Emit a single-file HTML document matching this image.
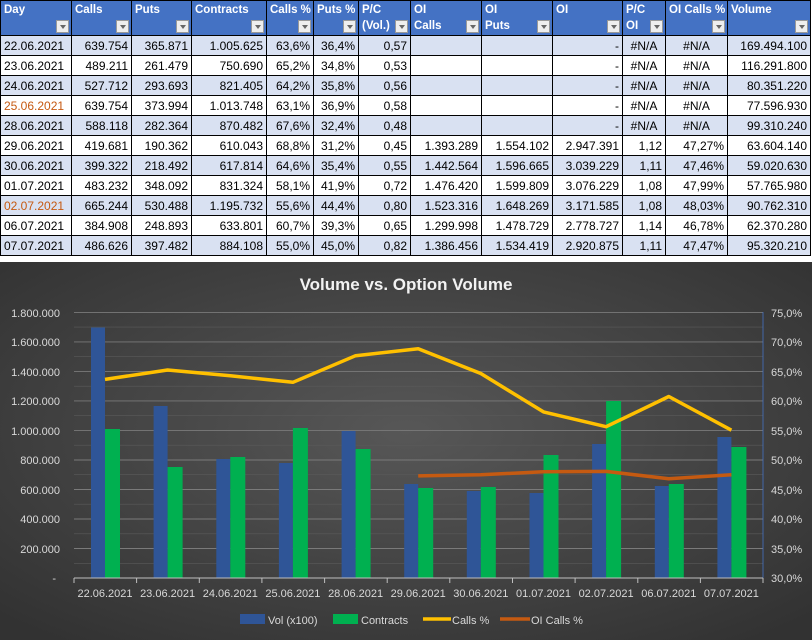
<!DOCTYPE html>
<html><head><meta charset="utf-8"><style>
body{margin:0;width:812px;height:640px;overflow:hidden;background:#fff;font-family:"Liberation Sans",sans-serif;}
table{position:absolute;left:0;top:0;border-collapse:collapse;table-layout:fixed;width:810px;}
td{border:1px solid #000;font-size:12px;height:19px;padding:0 3px;text-align:right;white-space:nowrap;overflow:hidden;color:#000;}
tr.h td{background:#4472C4;color:#fff;font-weight:bold;height:33px;text-align:left;vertical-align:top;position:relative;font-size:11.5px;line-height:16px;padding-top:1px;}
tr.b td{background:#D9E1F2;}
td.d{text-align:left;}
td.c{text-align:center;}
.o{color:#C65911;}
.f{position:absolute;right:2px;bottom:2px;width:13px;height:13px;background:#eee;border:1px solid #999;box-sizing:border-box;}
.f:after{content:"";position:absolute;left:3px;top:4px;border-left:3px solid transparent;border-right:3px solid transparent;border-top:4px solid #666;}
#ch{position:absolute;left:0;top:262px;}
</style></head><body>
<table>
<colgroup><col style="width:71px"><col style="width:60px"><col style="width:60px"><col style="width:75px"><col style="width:47px"><col style="width:45px"><col style="width:52px"><col style="width:71px"><col style="width:71px"><col style="width:70px"><col style="width:43px"><col style="width:62px"><col style="width:83px"></colgroup>
<tr class="h"><td>Day<span class="f"></span></td><td>Calls<span class="f"></span></td><td>Puts<span class="f"></span></td><td>Contracts<span class="f"></span></td><td>Calls %<span class="f"></span></td><td>Puts %<span class="f"></span></td><td>P/C<br>(Vol.)<span class="f"></span></td><td>OI<br>Calls<span class="f"></span></td><td>OI<br>Puts<span class="f"></span></td><td>OI<span class="f"></span></td><td>P/C<br>OI<span class="f"></span></td><td>OI Calls %<span class="f"></span></td><td>Volume<span class="f"></span></td></tr>
<tr class="b"><td class="d">22.06.2021</td><td>639.754</td><td>365.871</td><td>1.005.625</td><td>63,6%</td><td>36,4%</td><td>0,57</td><td></td><td></td><td>-</td><td class="c">#N/A</td><td class="c">#N/A</td><td>169.494.100</td></tr>
<tr><td class="d">23.06.2021</td><td>489.211</td><td>261.479</td><td>750.690</td><td>65,2%</td><td>34,8%</td><td>0,53</td><td></td><td></td><td>-</td><td class="c">#N/A</td><td class="c">#N/A</td><td>116.291.800</td></tr>
<tr class="b"><td class="d">24.06.2021</td><td>527.712</td><td>293.693</td><td>821.405</td><td>64,2%</td><td>35,8%</td><td>0,56</td><td></td><td></td><td>-</td><td class="c">#N/A</td><td class="c">#N/A</td><td>80.351.220</td></tr>
<tr><td class="d o">25.06.2021</td><td>639.754</td><td>373.994</td><td>1.013.748</td><td>63,1%</td><td>36,9%</td><td>0,58</td><td></td><td></td><td>-</td><td class="c">#N/A</td><td class="c">#N/A</td><td>77.596.930</td></tr>
<tr class="b"><td class="d">28.06.2021</td><td>588.118</td><td>282.364</td><td>870.482</td><td>67,6%</td><td>32,4%</td><td>0,48</td><td></td><td></td><td>-</td><td class="c">#N/A</td><td class="c">#N/A</td><td>99.310.240</td></tr>
<tr><td class="d">29.06.2021</td><td>419.681</td><td>190.362</td><td>610.043</td><td>68,8%</td><td>31,2%</td><td>0,45</td><td>1.393.289</td><td>1.554.102</td><td>2.947.391</td><td>1,12</td><td>47,27%</td><td>63.604.140</td></tr>
<tr class="b"><td class="d">30.06.2021</td><td>399.322</td><td>218.492</td><td>617.814</td><td>64,6%</td><td>35,4%</td><td>0,55</td><td>1.442.564</td><td>1.596.665</td><td>3.039.229</td><td>1,11</td><td>47,46%</td><td>59.020.630</td></tr>
<tr><td class="d">01.07.2021</td><td>483.232</td><td>348.092</td><td>831.324</td><td>58,1%</td><td>41,9%</td><td>0,72</td><td>1.476.420</td><td>1.599.809</td><td>3.076.229</td><td>1,08</td><td>47,99%</td><td>57.765.980</td></tr>
<tr class="b"><td class="d o">02.07.2021</td><td>665.244</td><td>530.488</td><td>1.195.732</td><td>55,6%</td><td>44,4%</td><td>0,80</td><td>1.523.316</td><td>1.648.269</td><td>3.171.585</td><td>1,08</td><td>48,03%</td><td>90.762.310</td></tr>
<tr><td class="d">06.07.2021</td><td>384.908</td><td>248.893</td><td>633.801</td><td>60,7%</td><td>39,3%</td><td>0,65</td><td>1.299.998</td><td>1.478.729</td><td>2.778.727</td><td>1,14</td><td>46,78%</td><td>62.370.280</td></tr>
<tr class="b"><td class="d">07.07.2021</td><td>486.626</td><td>397.482</td><td>884.108</td><td>55,0%</td><td>45,0%</td><td>0,82</td><td>1.386.456</td><td>1.534.419</td><td>2.920.875</td><td>1,11</td><td>47,47%</td><td>95.320.210</td></tr>
</table>
<svg id="ch" width="812" height="378" viewBox="0 262 812 378" font-family="Liberation Sans, sans-serif">
<defs><radialGradient id="g" cx="50%" cy="45%" r="70%"><stop offset="0" stop-color="#575757"/><stop offset="1" stop-color="#323232"/></radialGradient></defs>
<rect x="0" y="262" width="812" height="378" fill="url(#g)"/>
<text x="406" y="290" text-anchor="middle" fill="#f2f2f2" font-size="17" font-weight="bold">Volume vs. Option Volume</text>
<g stroke="#5a5a5a" stroke-width="0.6">
<line x1="74" x2="763" y1="327.1" y2="327.1"/><line x1="74" x2="763" y1="356.6" y2="356.6"/><line x1="74" x2="763" y1="386.2" y2="386.2"/><line x1="74" x2="763" y1="415.7" y2="415.7"/><line x1="74" x2="763" y1="445.2" y2="445.2"/><line x1="74" x2="763" y1="474.7" y2="474.7"/><line x1="74" x2="763" y1="504.2" y2="504.2"/><line x1="74" x2="763" y1="533.8" y2="533.8"/><line x1="74" x2="763" y1="563.3" y2="563.3"/>
</g>
<g stroke="#7a7a7a" stroke-width="0.9">
<line x1="74" x2="763" y1="312.4" y2="312.4"/><line x1="74" x2="763" y1="341.9" y2="341.9"/><line x1="74" x2="763" y1="371.4" y2="371.4"/><line x1="74" x2="763" y1="400.9" y2="400.9"/><line x1="74" x2="763" y1="430.4" y2="430.4"/><line x1="74" x2="763" y1="460" y2="460"/><line x1="74" x2="763" y1="489.5" y2="489.5"/><line x1="74" x2="763" y1="519" y2="519"/><line x1="74" x2="763" y1="548.5" y2="548.5"/>
</g>
<line x1="763" x2="763" y1="312" y2="578" stroke="#4472C4" stroke-width="0.8"/>
<g fill="#2F5597">
<rect x="91" y="327.5" width="14" height="250.5"/><rect x="153.6" y="406" width="14" height="172"/><rect x="216.3" y="459" width="14" height="119"/><rect x="278.9" y="463" width="14" height="115"/><rect x="341.6" y="431" width="14" height="147"/><rect x="404.2" y="484" width="14" height="94"/><rect x="466.8" y="491" width="14" height="87"/><rect x="529.5" y="493" width="14" height="85"/><rect x="592.1" y="444" width="14" height="134"/><rect x="654.8" y="486" width="14" height="92"/><rect x="717.4" y="437" width="14" height="141"/>
</g>
<g fill="#00B050">
<rect x="105" y="429" width="15" height="149"/><rect x="167.6" y="467" width="15" height="111"/><rect x="230.3" y="457" width="15" height="121"/><rect x="292.9" y="428" width="15" height="150"/><rect x="355.6" y="449" width="15" height="129"/><rect x="418.2" y="488" width="15" height="90"/><rect x="480.8" y="487" width="15" height="91"/><rect x="543.5" y="455" width="15" height="123"/><rect x="606.1" y="401" width="15" height="177"/><rect x="668.8" y="484" width="15" height="94"/><rect x="731.4" y="447" width="15" height="131"/>
</g>
<line x1="74" x2="763" y1="578" y2="578" stroke="#bfbfbf" stroke-width="1"/>
<g stroke="#bfbfbf"><line x1="74" x2="74" y1="578" y2="583"/><line x1="136.6" x2="136.6" y1="578" y2="583"/><line x1="199.3" x2="199.3" y1="578" y2="583"/><line x1="261.9" x2="261.9" y1="578" y2="583"/><line x1="324.6" x2="324.6" y1="578" y2="583"/><line x1="387.2" x2="387.2" y1="578" y2="583"/><line x1="449.8" x2="449.8" y1="578" y2="583"/><line x1="512.5" x2="512.5" y1="578" y2="583"/><line x1="575.1" x2="575.1" y1="578" y2="583"/><line x1="637.8" x2="637.8" y1="578" y2="583"/><line x1="700.4" x2="700.4" y1="578" y2="583"/><line x1="763" x2="763" y1="578" y2="583"/></g>
<polyline fill="none" stroke="#FFC000" stroke-width="3.5" stroke-linejoin="round" points="105,379.4 167.6,370 230.3,375.8 292.9,382.3 355.6,355.7 418.2,348.7 480.8,373.5 543.5,411.9 606.1,426.7 668.8,396.5 731.4,430.2"/>
<polyline fill="none" stroke="#C55A11" stroke-width="3.5" stroke-linejoin="round" points="418.2,475.9 480.8,474.8 543.5,471.7 606.1,471.4 668.8,478.8 731.4,474.7"/>
<g fill="#d9d9d9" font-size="11" text-anchor="end">
<text x="60" y="317">1.800.000</text><text x="60" y="346">1.600.000</text><text x="60" y="376">1.400.000</text><text x="60" y="405">1.200.000</text><text x="60" y="435">1.000.000</text><text x="60" y="464">800.000</text><text x="60" y="494">600.000</text><text x="60" y="523">400.000</text><text x="60" y="553">200.000</text><text x="56" y="582">-</text>
</g>
<g fill="#d9d9d9" font-size="11">
<text x="771" y="317">75,0%</text><text x="771" y="346">70,0%</text><text x="771" y="376">65,0%</text><text x="771" y="405">60,0%</text><text x="771" y="435">55,0%</text><text x="771" y="464">50,0%</text><text x="771" y="494">45,0%</text><text x="771" y="523">40,0%</text><text x="771" y="553">35,0%</text><text x="771" y="582">30,0%</text>
</g>
<g fill="#d9d9d9" font-size="11" text-anchor="middle">
<text x="105" y="597">22.06.2021</text><text x="167.6" y="597">23.06.2021</text><text x="230.3" y="597">24.06.2021</text><text x="292.9" y="597">25.06.2021</text><text x="355.6" y="597">28.06.2021</text><text x="418.2" y="597">29.06.2021</text><text x="480.8" y="597">30.06.2021</text><text x="543.5" y="597">01.07.2021</text><text x="606.1" y="597">02.07.2021</text><text x="668.8" y="597">06.07.2021</text><text x="731.4" y="597">07.07.2021</text>
</g>
<g font-size="11" fill="#d9d9d9">
<rect x="240" y="614" width="25" height="10" fill="#2F5597"/><text x="268" y="624">Vol (x100)</text>
<rect x="333" y="614" width="25" height="10" fill="#00B050"/><text x="361" y="624">Contracts</text>
<line x1="423" x2="451" y1="619" y2="619" stroke="#FFC000" stroke-width="3.5"/><text x="452" y="624">Calls %</text>
<line x1="500" x2="530" y1="619" y2="619" stroke="#C55A11" stroke-width="3.5"/><text x="531" y="624">OI Calls %</text>
</g>
</svg>
</body></html>
